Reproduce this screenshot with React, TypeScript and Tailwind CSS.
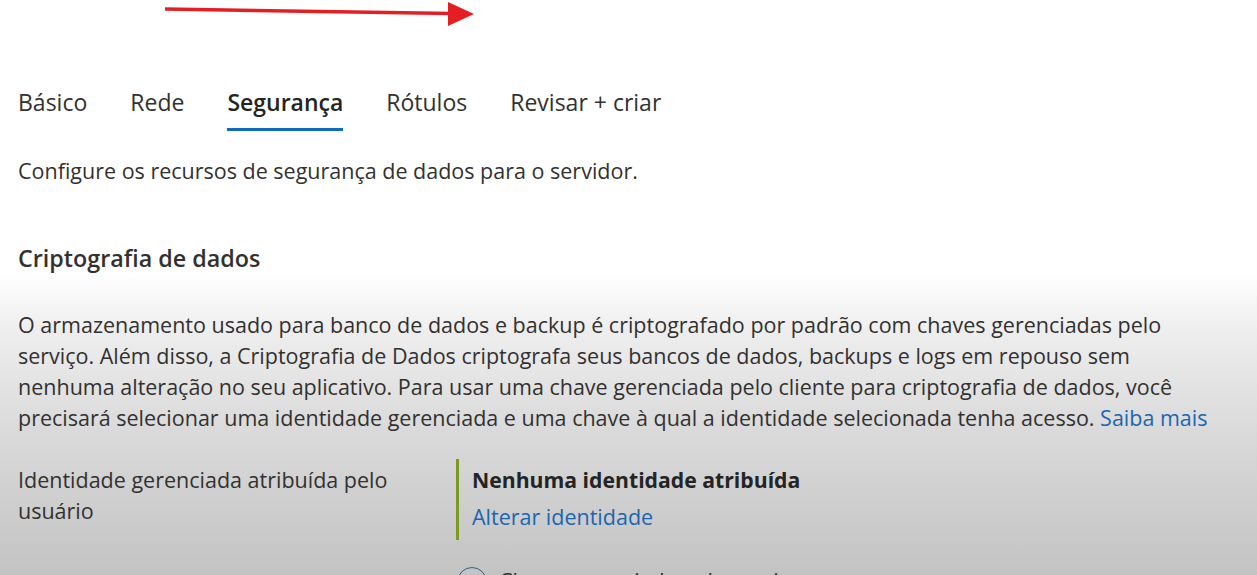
const tabs = ["Básico", "Rede", "Segurança", "Rótulos", "Revisar + criar"];

const paragraph = [
  "O armazenamento usado para banco de dados e backup é criptografado por padrão com chaves gerenciadas pelo",
  "serviço. Além disso, a Criptografia de Dados criptografa seus bancos de dados, backups e logs em repouso sem",
  "nenhuma alteração no seu aplicativo. Para usar uma chave gerenciada pelo cliente para criptografia de dados, você",
];

function Arrow() {
  return (
    <svg
      className="absolute left-0 top-0"
      width="500"
      height="40"
      viewBox="0 0 500 40"
    >
      <line x1="165" y1="9" x2="452" y2="13.5" stroke="#e51e23" strokeWidth="3.5" />
      <polygon points="448,2 474,14 448,26" fill="#e51e23" />
    </svg>
  );
}

export default function App() {
  return (
    <div
      className="relative h-[575px] w-[1257px] overflow-hidden bg-[linear-gradient(to_bottom,#ffffff_0px,#ffffff_272px,#eeeeee_330px,#dadada_430px,#c3c3c3_575px)] text-[#323130]"
      style={{ fontFamily: '"Open Sans", "Noto Sans", sans-serif' }}
    >
      <Arrow />
      <div className="pl-[18px] pt-[84px]">
        <nav className="flex gap-[43px]">
          {tabs.map((tab) => {
            const active = tab === "Segurança";
            return (
              <div key={tab} className="flex flex-col">
                <span
                  className={
                    "text-[23px] leading-[36px] " +
                    (active ? "font-semibold text-[#242424]" : "text-[#323130]")
                  }
                >
                  {tab}
                </span>
                <span
                  className={
                    "mt-[8px] h-[3px] " + (active ? "bg-[#0f6cbd]" : "bg-transparent")
                  }
                />
              </div>
            );
          })}
        </nav>

        <p className="mt-[26px] text-[21.5px] leading-[28px]">
          Configure os recursos de segurança de dados para o servidor.
        </p>

        <h2 className="mt-[57px] text-[23.3px] font-semibold leading-[32px]">
          Criptografia de dados
        </h2>

        <div className="mt-[35px] text-[21.5px] leading-[31px]">
          {paragraph.map((line) => (
            <div key={line} className="whitespace-nowrap">
              {line}
            </div>
          ))}
          <div className="whitespace-nowrap">
            precisará selecionar uma identidade gerenciada e uma chave à qual a identidade selecionada tenha acesso.{" "}
            <a className="text-[#1b66b1]">Saiba mais</a>
          </div>
        </div>

        <div className="mt-[26px] flex">
          <div className="w-[438px] pt-[5px] text-[21.5px] leading-[31px]">
            Identidade gerenciada atribuída pelo
            <br />
            usuário
          </div>
          <div className="flex flex-col gap-[27px]">
            <div className="flex h-[81px] flex-col border-l-[3px] border-[#7b9a1f] pl-[13px] pt-[7px]">
              <span className="text-[21.2px] font-bold leading-[28px] text-[#242424]">
                Nenhuma identidade atribuída
              </span>
              <a className="mt-[9px] text-[21.5px] leading-[28px] text-[#1b66b1]">
                Alterar identidade
              </a>
            </div>
            <label className="flex items-start gap-[12px] pl-[1px]">
              <span className="h-[30px] w-[30px] shrink-0 rounded-full border-[1.5px] border-[#2f5f86]" />
              <span className="text-[21.5px] leading-[28px]">Chave gerenciada pelo serviço</span>
            </label>
          </div>
        </div>
      </div>
    </div>
  );
}
